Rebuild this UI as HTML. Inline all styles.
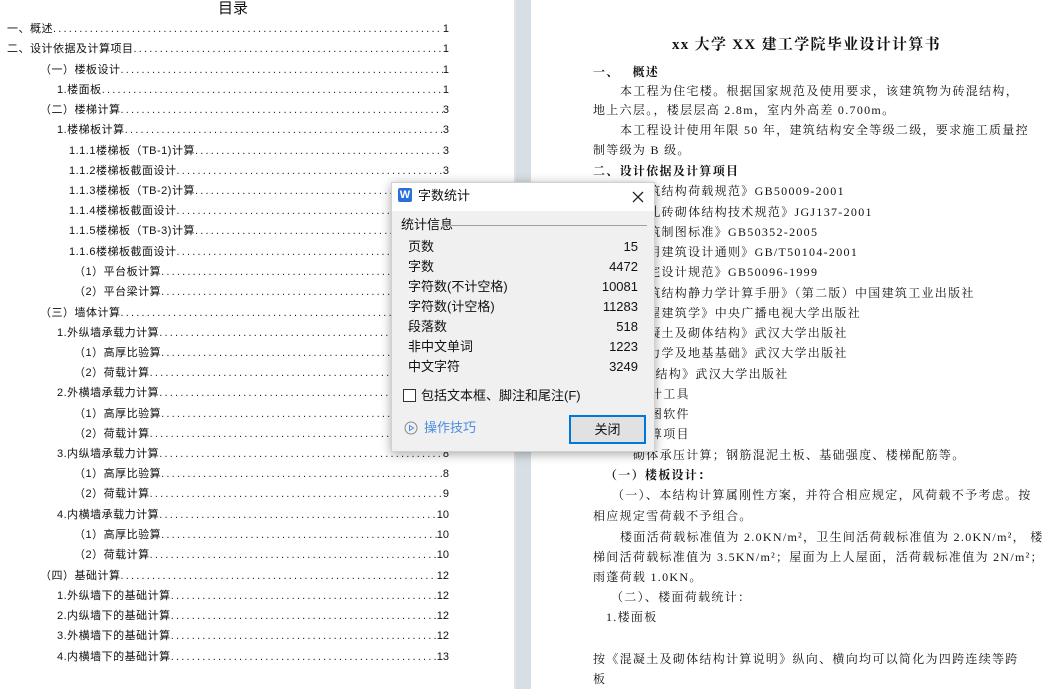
<!DOCTYPE html>
<html><head><meta charset="utf-8">
<style>
*{margin:0;padding:0;box-sizing:border-box}
body{width:1047px;height:689px;overflow:hidden;background:#fff;position:relative;font-family:"Liberation Sans","Noto Sans CJK SC",sans-serif;color:#111}
.gap{position:absolute;left:514px;top:0;width:2px;height:689px;background:#e4e4e4}
.strip{position:absolute;left:516px;top:0;width:15px;height:689px;background:#d6e0e4}
.toc{position:absolute;height:16px;font-size:11px;line-height:16px;display:flex;white-space:nowrap;letter-spacing:0.5px}
.toc .d{flex:1;overflow:hidden;letter-spacing:2.2px;color:#222}
.toc .n{width:auto;text-align:right;letter-spacing:0}
.r{position:absolute;left:593px;font-size:12px;line-height:16px;white-space:nowrap;letter-spacing:1.3px;font-family:"Liberation Serif","Noto Serif CJK SC",serif;color:#111}
.b{font-weight:bold}
.dlg{position:absolute;left:391px;top:182px;width:264px;height:270px;background:#f0f0f0;box-shadow:0 2px 10px rgba(0,0,0,.35);border:1px solid #d0d0d0}
.tb{height:28px;background:#fff;position:relative}
.row{position:absolute;left:16px;width:230px;font-size:13px;line-height:18px;display:flex;justify-content:space-between;color:#111}
</style></head><body>
<div style="position:absolute;left:218px;top:0;font-size:15px;line-height:18px">目录</div>
<div class="gap"></div><div class="strip"></div>

<div class="toc" style="left:7px;top:21px;width:442px"><span>一、概述</span><span class="d">........................................................................................................</span><span class="n">1</span></div>
<div class="toc" style="left:7px;top:41px;width:442px"><span>二、设计依据及计算项目</span><span class="d">........................................................................................................</span><span class="n">1</span></div>
<div class="toc" style="left:40px;top:62px;width:409px"><span>（一）楼板设计</span><span class="d">........................................................................................................</span><span class="n">1</span></div>
<div class="toc" style="left:57px;top:82px;width:392px"><span>1.楼面板</span><span class="d">........................................................................................................</span><span class="n">1</span></div>
<div class="toc" style="left:40px;top:102px;width:409px"><span>（二）楼梯计算</span><span class="d">........................................................................................................</span><span class="n">3</span></div>
<div class="toc" style="left:57px;top:122px;width:392px"><span>1.楼梯板计算</span><span class="d">........................................................................................................</span><span class="n">3</span></div>
<div class="toc" style="left:69px;top:143px;width:380px"><span>1.1.1楼梯板（TB-1)计算</span><span class="d">........................................................................................................</span><span class="n">3</span></div>
<div class="toc" style="left:69px;top:163px;width:380px"><span>1.1.2楼梯板截面设计</span><span class="d">........................................................................................................</span><span class="n">3</span></div>
<div class="toc" style="left:69px;top:183px;width:380px"><span>1.1.3楼梯板（TB-2)计算</span><span class="d">........................................................................................................</span><span class="n">3</span></div>
<div class="toc" style="left:69px;top:203px;width:380px"><span>1.1.4楼梯板截面设计</span><span class="d">........................................................................................................</span><span class="n">3</span></div>
<div class="toc" style="left:69px;top:223px;width:380px"><span>1.1.5楼梯板（TB-3)计算</span><span class="d">........................................................................................................</span><span class="n">3</span></div>
<div class="toc" style="left:69px;top:244px;width:380px"><span>1.1.6楼梯板截面设计</span><span class="d">........................................................................................................</span><span class="n">3</span></div>
<div class="toc" style="left:74px;top:264px;width:375px"><span>（1）平台板计算</span><span class="d">........................................................................................................</span><span class="n">3</span></div>
<div class="toc" style="left:74px;top:284px;width:375px"><span>（2）平台梁计算</span><span class="d">........................................................................................................</span><span class="n">3</span></div>
<div class="toc" style="left:40px;top:305px;width:409px"><span>（三）墙体计算</span><span class="d">........................................................................................................</span><span class="n">3</span></div>
<div class="toc" style="left:57px;top:325px;width:392px"><span>1.外纵墙承载力计算</span><span class="d">........................................................................................................</span><span class="n">3</span></div>
<div class="toc" style="left:74px;top:345px;width:375px"><span>（1）高厚比验算</span><span class="d">........................................................................................................</span><span class="n">3</span></div>
<div class="toc" style="left:74px;top:365px;width:375px"><span>（2）荷载计算</span><span class="d">........................................................................................................</span><span class="n">3</span></div>
<div class="toc" style="left:57px;top:385px;width:392px"><span>2.外横墙承载力计算</span><span class="d">........................................................................................................</span><span class="n">8</span></div>
<div class="toc" style="left:74px;top:406px;width:375px"><span>（1）高厚比验算</span><span class="d">........................................................................................................</span><span class="n">8</span></div>
<div class="toc" style="left:74px;top:426px;width:375px"><span>（2）荷载计算</span><span class="d">........................................................................................................</span><span class="n">8</span></div>
<div class="toc" style="left:57px;top:446px;width:392px"><span>3.内纵墙承载力计算</span><span class="d">........................................................................................................</span><span class="n">8</span></div>
<div class="toc" style="left:74px;top:466px;width:375px"><span>（1）高厚比验算</span><span class="d">........................................................................................................</span><span class="n">8</span></div>
<div class="toc" style="left:74px;top:486px;width:375px"><span>（2）荷载计算</span><span class="d">........................................................................................................</span><span class="n">9</span></div>
<div class="toc" style="left:57px;top:507px;width:392px"><span>4.内横墙承载力计算</span><span class="d">........................................................................................................</span><span class="n">10</span></div>
<div class="toc" style="left:74px;top:527px;width:375px"><span>（1）高厚比验算</span><span class="d">........................................................................................................</span><span class="n">10</span></div>
<div class="toc" style="left:74px;top:547px;width:375px"><span>（2）荷载计算</span><span class="d">........................................................................................................</span><span class="n">10</span></div>
<div class="toc" style="left:40px;top:568px;width:409px"><span>（四）基础计算</span><span class="d">........................................................................................................</span><span class="n">12</span></div>
<div class="toc" style="left:57px;top:588px;width:392px"><span>1.外纵墙下的基础计算</span><span class="d">........................................................................................................</span><span class="n">12</span></div>
<div class="toc" style="left:57px;top:608px;width:392px"><span>2.内纵墙下的基础计算</span><span class="d">........................................................................................................</span><span class="n">12</span></div>
<div class="toc" style="left:57px;top:628px;width:392px"><span>3.外横墙下的基础计算</span><span class="d">........................................................................................................</span><span class="n">12</span></div>
<div class="toc" style="left:57px;top:649px;width:392px"><span>4.内横墙下的基础计算</span><span class="d">........................................................................................................</span><span class="n">13</span></div>

<div class="r b" style="left:672px;top:36px;font-size:15px;line-height:18px;letter-spacing:1.3px">xx 大学 XX 建工学院毕业设计计算书</div>
<div class="r b" style="top:64px">一、&nbsp;&nbsp;&nbsp;概述</div>
<div class="r" style="left:620px;top:83px">本工程为住宅楼。根据国家规范及使用要求，该建筑物为砖混结构，</div>
<div class="r" style="top:102px">地上六层。，楼层层高 2.8m，室内外高差 0.700m。</div>
<div class="r" style="left:620px;top:122px">本工程设计使用年限 50 年，建筑结构安全等级二级，要求施工质量控</div>
<div class="r" style="top:142px">制等级为 B 级。</div>
<div class="r b" style="top:163px">二、设计依据及计算项目</div>
<div class="r" style="left:610px;top:183px">1.《建筑结构荷载规范》GB50009-2001</div>
<div class="r" style="left:610px;top:204px">2.《多孔砖砌体结构技术规范》JGJ137-2001</div>
<div class="r" style="left:610px;top:224px">3.《建筑制图标准》GB50352-2005</div>
<div class="r" style="left:610px;top:244px">4.《民用建筑设计通则》GB/T50104-2001</div>
<div class="r" style="left:610px;top:264px">5.《住宅设计规范》GB50096-1999</div>
<div class="r" style="left:610px;top:285px">6.《建筑结构静力学计算手册》（第二版）中国建筑工业出版社</div>
<div class="r" style="left:610px;top:305px">7.《房屋建筑学》中央广播电视大学出版社</div>
<div class="r" style="left:610px;top:325px">8.《混凝土及砌体结构》武汉大学出版社</div>
<div class="r" style="left:610px;top:345px">9.《土力学及地基基础》武汉大学出版社</div>
<div class="r" style="left:610px;top:366px">10.《钢结构》武汉大学出版社</div>
<div class="r" style="left:610px;top:386px">辅助设计工具</div>
<div class="r" style="left:610px;top:406px">验证绘图软件</div>
<div class="r" style="left:610px;top:426px">设计计算项目</div>
<div class="r" style="left:633px;top:447px">砌体承压计算；钢筋混泥土板、基础强度、楼梯配筋等。</div>
<div class="r b" style="left:605px;top:467px">（一）楼板设计：</div>
<div class="r" style="left:612px;top:487px">（一）、本结构计算属刚性方案，并符合相应规定，风荷载不予考虑。按</div>
<div class="r" style="top:508px">相应规定雪荷载不予组合。</div>
<div class="r" style="left:620px;top:529px">楼面活荷载标准值为 2.0KN/m²，卫生间活荷载标准值为 2.0KN/m²，&nbsp;楼</div>
<div class="r" style="top:549px">梯间活荷载标准值为 3.5KN/m²；屋面为上人屋面，活荷载标准值为 2N/m²；</div>
<div class="r" style="top:569px">雨蓬荷载 1.0KN。</div>
<div class="r" style="left:611px;top:589px">（二）、楼面荷载统计：</div>
<div class="r" style="left:606px;top:609px">1.楼面板</div>
<div class="r" style="top:651px">按《混凝土及砌体结构计算说明》纵向、横向均可以简化为四跨连续等跨</div>
<div class="r" style="top:671px">板</div>

<div class="dlg">
 <div class="tb">
  <div style="position:absolute;left:6px;top:5px;width:14px;height:14px;background:#2b6fd9;border-radius:2px;color:#fff;font-size:11px;font-weight:bold;line-height:14px;text-align:center">W</div>
  <div style="position:absolute;left:26px;top:4px;font-size:13px;line-height:18px">字数统计</div>
  <svg style="position:absolute;left:240px;top:8px" width="12" height="12"><path d="M1 1L11 11M11 1L1 11" stroke="#222" stroke-width="1.3"/></svg>
 </div>
 <div style="position:absolute;left:9px;top:34px;font-size:13px;line-height:16px">统计信息</div>
 <div style="position:absolute;left:59px;top:42px;width:196px;height:1px;background:#a0a0a0"></div>
 <div class="row" style="top:55px"><span>页数</span><span>15</span></div>
 <div class="row" style="top:75px"><span>字数</span><span>4472</span></div>
 <div class="row" style="top:95px"><span>字符数(不计空格)</span><span>10081</span></div>
 <div class="row" style="top:115px"><span>字符数(计空格)</span><span>11283</span></div>
 <div class="row" style="top:135px"><span>段落数</span><span>518</span></div>
 <div class="row" style="top:155px"><span>非中文单词</span><span>1223</span></div>
 <div class="row" style="top:175px"><span>中文字符</span><span>3249</span></div>
 <div style="position:absolute;left:11px;top:206px;width:13px;height:13px;border:1px solid #333;background:#fff"></div>
 <div style="position:absolute;left:29px;top:204px;font-size:13px;line-height:17px">包括文本框、脚注和尾注(F)</div>
 <svg style="position:absolute;left:12px;top:238px" width="14" height="14"><circle cx="7" cy="7" r="6" fill="none" stroke="#888" stroke-width="1"/><path d="M5.5 4.5L9.5 7L5.5 9.5Z" fill="none" stroke="#4a8ee0" stroke-width="1"/></svg>
 <div style="position:absolute;left:32px;top:236px;font-size:13px;line-height:17px;color:#4a8ee0">操作技巧</div>
 <div style="position:absolute;left:177px;top:232px;width:77px;height:29px;border:2px solid #0078d7;background:#e1e1e1;font-size:13px;line-height:25px;text-align:center">关闭</div>
</div>
</body></html>
